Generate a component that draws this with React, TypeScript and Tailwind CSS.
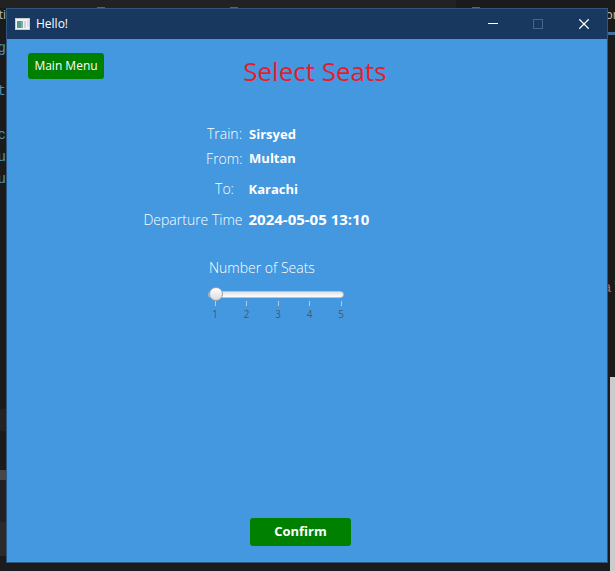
import { useState } from "react";

const details = [
  { label: "Train:", value: "Sirsyed", height: "h-6", size: "text-[13px]" },
  { label: "From:", value: "Multan", height: "h-[25px]", size: "text-[13px]" },
  { label: "To:", value: "Karachi", height: "h-9", size: "text-[13px]" },
  { label: "Departure Time", value: "2024-05-05 13:10", height: "h-[25px]", size: "text-[15px]" },
];

const seatOptions = [1, 2, 3, 4, 5];

function AppIcon() {
  return (
    <svg width="16" height="13" viewBox="0 0 16 13" aria-hidden="true">
      <rect x="0.5" y="0.5" width="14" height="11" fill="#f1f3f3" stroke="#c9ced2" />
      <rect x="2" y="3" width="5" height="7" fill="#4f9a8c" />
      <rect x="6" y="3" width="2" height="7" fill="#83a8b5" />
      <rect x="9" y="3" width="2" height="7" fill="#d2d6d6" />
      <rect x="12" y="2" width="2" height="7" fill="#dfe2e2" />
    </svg>
  );
}

function TitleBar() {
  return (
    <header className="flex h-[30px] shrink-0 items-center bg-[#18385f] pl-2 text-white">
      <AppIcon />
      <span className="ml-[5px] flex-1 text-xs">Hello!</span>
      <button type="button" aria-label="Minimize" className="flex h-full w-[45px] items-center justify-center">
        <svg width="10" height="10" viewBox="0 0 10 10">
          <path d="M0 4.5h10" stroke="currentColor" />
        </svg>
      </button>
      <button type="button" aria-label="Maximize" disabled className="flex h-full w-[45px] items-center justify-center text-[#48648a]">
        <svg width="10" height="10" viewBox="0 0 10 10">
          <rect x="0.5" y="0.5" width="9" height="9" fill="none" stroke="currentColor" />
        </svg>
      </button>
      <button type="button" aria-label="Close" className="flex h-full w-[47px] items-center justify-center">
        <svg width="10" height="10" viewBox="0 0 10 10">
          <path d="M0.3 0.3l9.4 9.4M9.7 0.3l-9.4 9.4" stroke="currentColor" strokeWidth="1.3" />
        </svg>
      </button>
    </header>
  );
}

function SeatSlider() {
  const [seats, setSeats] = useState(1);
  return (
    <div className="w-[136px]">
      <label htmlFor="seats" className="block pl-px text-sm leading-6 font-light whitespace-nowrap">
        Number of Seats
      </label>
      <input
        id="seats"
        type="range"
        min={1}
        max={5}
        value={seats}
        onChange={(e) => setSeats(Number(e.target.value))}
        className="mt-[7px] block h-3.5 w-full appearance-none bg-transparent [&::-webkit-slider-runnable-track]:h-[7px] [&::-webkit-slider-runnable-track]:rounded-sm [&::-webkit-slider-runnable-track]:border [&::-webkit-slider-runnable-track]:border-[#b7c3cd] [&::-webkit-slider-runnable-track]:bg-linear-to-b [&::-webkit-slider-runnable-track]:from-[#e2e2e2] [&::-webkit-slider-runnable-track]:to-white [&::-webkit-slider-thumb]:-mt-[5px] [&::-webkit-slider-thumb]:size-3.5 [&::-webkit-slider-thumb]:appearance-none [&::-webkit-slider-thumb]:rounded-full [&::-webkit-slider-thumb]:border [&::-webkit-slider-thumb]:border-[#9aa0a5] [&::-webkit-slider-thumb]:bg-linear-to-b [&::-webkit-slider-thumb]:from-white [&::-webkit-slider-thumb]:to-[#dcdcdc]"
      />
      <div className="-mr-px flex justify-between pl-[3px] text-[10px] leading-3 text-[#465a6c]">
        {seatOptions.map((n) => (
          <div key={n} className="flex w-2 flex-col items-center gap-0.5">
            <span className="h-[5px] w-px bg-[#b9cad9]" />
            <span>{n}</span>
          </div>
        ))}
      </div>
    </div>
  );
}

function LeftEditorEdge() {
  return (
    <div aria-hidden="true" className="flex w-1.5 shrink-0 flex-col overflow-hidden font-['Liberation_Mono',monospace] text-sm text-[#4f8fae]">
      <div className="flex h-[30px] justify-end text-xs leading-[14px] text-[#b8b8b8] font-['Open_Sans',sans-serif]">ti</div>
      <div className="flex h-[43px] justify-end leading-5">g</div>
      <div className="flex h-11 justify-end leading-5">t</div>
      <div className="flex h-[22px] justify-end leading-5">c</div>
      <div className="flex h-[22px] justify-end leading-5">u</div>
      <div className="flex h-[22px] justify-end leading-5">u</div>
      <div className="flex-1" />
      <div className="h-[22px] bg-[#242424]" />
      <div className="h-[39px]" />
      <div className="h-2.5 bg-[#484848]" />
      <div className="h-[42px] bg-[#222224]" />
      <div className="h-[34px] bg-[#2b2b2b]" />
      <div className="h-[15px]" />
    </div>
  );
}

function RightEditorEdge() {
  return (
    <div aria-hidden="true" className="flex w-[7px] shrink-0 flex-col overflow-hidden">
      <div className="flex h-6 justify-center text-xs leading-[14px] text-[#c4c4c4]">or</div>
      <div className="h-[3px] bg-[#41719f]" />
      <div className="h-[243px]" />
      <div className="flex h-5 justify-center font-['Liberation_Mono',monospace] text-sm leading-5 text-[#a0705c]">a'</div>
      <div className="h-[79px]" />
      <div className="ml-0.5 flex-1 bg-[#cbcbcd]" />
    </div>
  );
}

function TopEditorEdge() {
  return (
    <div aria-hidden="true" className="flex h-2 shrink-0 items-end bg-[#222222]">
      <div className="flex flex-1 items-end pl-[97px]">
        <span className="h-px w-2 bg-[#4a5ac0]" />
        <span className="ml-[125px] h-px w-2 bg-[#4a5ac0]" />
      </div>
      <div className="flex h-full w-[159px] items-end bg-[#1b1b1c] pl-4">
        <span className="h-px w-2 bg-[#4a5ac0]" />
      </div>
    </div>
  );
}

export default function App() {
  return (
    <div className="flex min-h-screen flex-col bg-[#1b1b1c] font-['Open_Sans','Noto_Sans',sans-serif]">
      <TopEditorEdge />
      <div className="flex flex-1">
        <LeftEditorEdge />
        <div className="mb-2 flex min-w-0 flex-1 flex-col border border-[#2f5680]">
          <TitleBar />
          <main className="flex flex-1 flex-col items-center bg-[#4398e0] pb-4 text-white font-['Comic_Sans_MS','Open_Sans',sans-serif]">
            <div className="grid w-full grid-cols-[1fr_auto_1fr] items-start pt-3.5 pr-[5px] pl-[21px]">
              <button type="button" className="h-[26px] w-19 justify-self-start rounded-[3px] bg-[#008000] text-xs font-['Open_Sans',sans-serif]">
                Main Menu
              </button>
              <h1 className="pt-0.5 text-[26px] leading-8 text-[#e81c2c]">Select Seats</h1>
            </div>
            <dl className="mt-[35px] pr-24 text-sm">
              {details.map((d) => (
                <div key={d.label} className={`grid grid-cols-[96px_123px] items-center gap-1.5 ${d.height}`}>
                  <dt className="min-w-9 justify-self-end text-center font-light whitespace-nowrap">{d.label}</dt>
                  <dd className={`min-w-12 justify-self-start text-center font-bold whitespace-nowrap ${d.size}`}>{d.value}</dd>
                </div>
              ))}
            </dl>
            <div className="mt-6 pr-[62px]">
              <SeatSlider />
            </div>
            <div className="mt-auto pr-[13px]">
              <button type="button" className="h-7 w-[101px] rounded-[3px] bg-[#008000] text-[13px] font-bold">
                Confirm
              </button>
            </div>
          </main>
        </div>
        <RightEditorEdge />
      </div>
    </div>
  );
}
